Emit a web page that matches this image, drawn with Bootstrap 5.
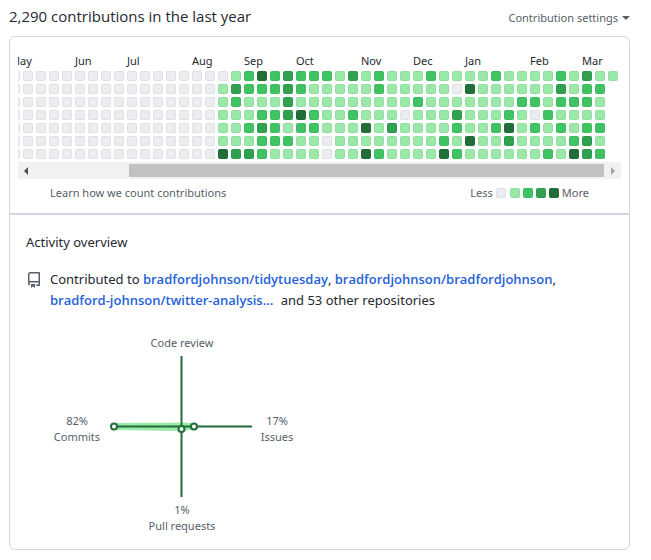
<!DOCTYPE html>
<html lang="en">
<head>
<meta charset="utf-8">
<meta name="viewport" content="width=device-width, initial-scale=1">
<title>Contributions</title>
<link href="https://cdn.jsdelivr.net/npm/bootstrap@5.3.0/dist/css/bootstrap.min.css" rel="stylesheet">
<style>
:root { --line: #d0d7e0; --muted: #57606a; --ink: #24292f; --lvl0: #ebedf0; --lvl1: #9be9a8; --lvl2: #40c463; --lvl3: #30a14e; --lvl4: #216e39; }
body { font-family: "Noto Sans", "Open Sans", sans-serif; font-size: 13px; line-height: 21px; color: var(--ink); }
.page { padding: 4px 21px 9px 9px; }
.title { font-family: "Open Sans", "Noto Sans", sans-serif; font-size: 15px; line-height: 24px; font-weight: 400; }
.small-text { font-size: 11px; line-height: 18px; color: var(--muted); }
.caret { width: 0; height: 0; border: 4px solid transparent; border-top-color: currentColor; border-bottom: 0; }
.panel { border: 1px solid var(--line); border-radius: 6px; margin-top: 8px; }
.graph-part { padding: 13px 8px 11px; border-bottom: 2px solid var(--line); }
.calendar { table-layout: fixed; width: 614px; border-collapse: separate; border-spacing: 3px; }
.calendar th { font-size: 11px; line-height: 15px; height: 15px; padding: 0; font-weight: 400; white-space: nowrap; }
.calendar td { height: 10px; padding: 0; }
.day { width: 10px; height: 10px; border-radius: 2px; border: 1px solid rgba(27, 31, 35, .06); background: var(--lvl0); }
.l1 { background: var(--lvl1); } .l2 { background: var(--lvl2); } .l3 { background: var(--lvl3); } .l4 { background: var(--lvl4); }
.scroller { height: 17px; background: #f1f1f1; }
.scroller button { width: 17px; height: 17px; }
.track { padding: 2px 0 2px 94px; }
.thumb { background: #c1c1c1; }
.legend-row { padding: 5px 32px 0; }
.legend { gap: 3px; }
.legend .day:first-of-type { margin-right: 1px; }
.overview { padding: 17px 16px 11px; }
.overview-title { font-size: 13px; line-height: 21px; font-weight: 400; }
.repos { margin-top: 16px; gap: 8px; padding-right: 20px; }
.repos a { font-family: "Open Sans", "Noto Sans", sans-serif; font-weight: 600; color: #1f62d8; }
.repo-icon { margin-top: 3px; }
.radar { margin-top: 14px; width: 302px; }
.radar text { font-size: 11px; fill: var(--muted); text-anchor: middle; }
</style>
<script src="https://cdn.jsdelivr.net/npm/bootstrap@5.3.0/dist/js/bootstrap.bundle.min.js" defer></script>
</head>
<body class="bg-white">
<main class="page">
  <header class="d-flex justify-content-between">
    <h2 class="title mb-0">2,290 contributions in the last year</h2>
    <button type="button" class="small-text btn p-0 pt-1 border-0 d-flex align-items-center gap-1">Contribution settings <span class="caret"></span></button>
  </header>
  <div class="panel">
    <section class="graph-part">
      <div class="d-flex justify-content-end overflow-hidden">
        <table class="calendar flex-shrink-0">
          <thead><tr>
            <th colspan="5">May</th><th colspan="4">Jun</th><th colspan="5">Jul</th><th colspan="4">Aug</th><th colspan="4">Sep</th><th colspan="5">Oct</th><th colspan="4">Nov</th><th colspan="4">Dec</th><th colspan="5">Jan</th><th colspan="4">Feb</th><th colspan="3">Mar</th>
          </tr></thead>
          <tbody id="days"></tbody>
        </table>
      </div>
      <div class="scroller d-flex">
        <button type="button" class="btn p-0 border-0 rounded-0 d-flex align-items-center justify-content-center" aria-label="Scroll left"><svg width="5" height="8" viewBox="0 0 5 8"><path d="M4 0v8L0 4z" fill="#505050"/></svg></button>
        <div class="track flex-grow-1 d-flex"><div class="thumb flex-grow-1"></div></div>
        <button type="button" class="btn p-0 border-0 rounded-0 d-flex align-items-center justify-content-center" aria-label="Scroll right"><svg width="5" height="8" viewBox="0 0 5 8"><path d="M1 0v8l4-4z" fill="#a3a3a3"/></svg></button>
      </div>
      <div class="legend-row small-text d-flex justify-content-between">
        <a href="#" class="text-reset text-decoration-none">Learn how we count contributions</a>
        <div class="legend d-flex align-items-center"><span>Less</span><div class="day"></div><div class="day l1"></div><div class="day l2"></div><div class="day l3"></div><div class="day l4"></div><span>More</span></div>
      </div>
    </section>
    <section class="overview">
      <h3 class="overview-title mb-0">Activity overview</h3>
      <div class="repos d-flex">
        <svg class="repo-icon flex-shrink-0" width="16" height="16" viewBox="0 0 16 16"><path fill="#57606a" fill-rule="evenodd" d="M2 2.5A2.5 2.5 0 014.5 0h8.75a.75.75 0 01.75.75v12.5a.75.75 0 01-.75.75h-2.5a.75.75 0 110-1.5h1.75v-2h-8a1 1 0 00-.714 1.7.75.75 0 01-1.072 1.05A2.495 2.495 0 012 11.5v-9zm10.5-1V9h-8c-.356 0-.694.074-1 .208V2.5a1 1 0 011-1h8zM5 12.25v3.25a.25.25 0 00.4.2l1.45-1.087a.25.25 0 01.3 0L8.6 15.7a.25.25 0 00.4-.2v-3.25a.25.25 0 00-.25-.25h-3.5a.25.25 0 00-.25.25z"/></svg>
        <div>Contributed to <a href="#" class="text-decoration-none">bradfordjohnson/tidytuesday</a>, <a href="#" class="text-decoration-none">bradfordjohnson/bradfordjohnson</a>, <a href="#" class="text-decoration-none text-nowrap me-1">bradford-johnson/twitter-analysis…</a> and 53 other repositories</div>
      </div>
      <svg class="radar d-block" height="213" viewBox="0 0 302 213">
        <path d="M88 98.500L155.500 98L168 98.500V104L155.500 105.500L88 104.500Z" fill="#9be9a8" stroke="#9be9a8" stroke-linejoin="round"/>
        <path d="M155.500 31V172M88 101.500H226" stroke="#216e39" stroke-width="2"/>
        <g fill="#fff" stroke="#216e39" stroke-width="2"><circle cx="88" cy="101.500" r="3"/><circle cx="168" cy="101.500" r="3"/><circle cx="155.500" cy="104" r="3"/></g>
        <text x="156" y="22">Code review</text>
        <text x="51" y="100">82%</text><text x="51" y="116">Commits</text>
        <text x="251" y="100">17%</text><text x="251" y="116">Issues</text>
        <text x="156" y="189">1%</text><text x="156" y="205">Pull requests</text>
      </svg>
    </section>
  </div>
</main>
<script>
// One string per weekday, one digit (activity level 0-4) per week.
const empty = "0".repeat(16);
const levels = [
  "01242322" + "213121112111" + "12111121311",
  "13222321" + "111121111104" + "1111113122",
  "12111311" + "111111121111" + "1112212221",
  "11122342" + "112111011131" + "1121021111",
  "11232122" + "111413111121" + "1241212122",
  "11122211" + "011111111214" + "1131111231",
  "43321111" + "011421111421" + "1111121432"
];
document.getElementById("days").innerHTML = levels.map(row =>
  "<tr>" + [...(empty + row)].map(n => `<td><div class="day l${n}"></div></td>`).join("") + "</tr>").join("");
</script>
</body>
</html>
